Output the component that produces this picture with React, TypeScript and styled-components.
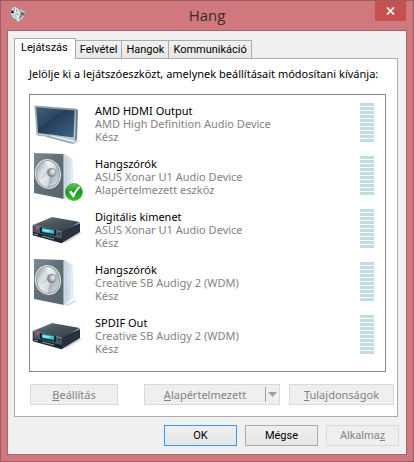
import React, { useState } from "react";
import styled, { createGlobalStyle, css } from "styled-components";

const uiFont = 'Roboto, "Liberation Sans", sans-serif';
const textFont = '"Noto Sans", "Open Sans", sans-serif';

const GlobalStyle = createGlobalStyle`
  *, *::before, *::after { box-sizing: border-box; }
  body { margin: 0; background: #d0787d; }
  button { margin: 0; }
`;

const Window = styled.div`
  min-height: 100vh;
  display: flex;
  flex-direction: column;
  padding: 0 6px 6px;
  border: 1px solid #9f5c60;
  background: #d0787d;
  font: 11px/16px ${textFont};
  color: #000;
`;

const TitleBar = styled.header`
  display: grid;
  grid-template-columns: 32px 1fr 32px;
  align-items: start;
  height: 29px;
`;

const TitleIcon = styled.span`
  padding: 5px 0 0 2px;
  svg { display: block; }
`;

const Title = styled.h1`
  margin: 0;
  padding-top: 4px;
  text-align: center;
  font: 15px/20px "Open Sans", "Noto Sans", sans-serif;
  color: #3a2b2d;
`;

const CloseButton = styled.button`
  width: 31px;
  height: 20px;
  display: flex;
  align-items: center;
  justify-content: center;
  padding: 0;
  border: 0;
  background: #c75050;
  color: #fff;
`;

const Client = styled.main`
  flex: 1;
  display: flex;
  flex-direction: column;
  padding: 7px 6px 8px;
  border: 1px solid #a9666a;
  background: #f0f0f0;
`;

const TabList = styled.div`
  display: flex;
  align-items: flex-end;
`;

const Tab = styled.button<{ $active: boolean }>`
  height: 18px;
  padding: 0 4px;
  border: 1px solid #acacac;
  border-bottom: 0;
  margin-left: -1px;
  background: linear-gradient(#f1f1f1, #e7e7e7);
  font: 11px/17px ${uiFont};
  color: #000;
  ${(p) =>
    p.$active &&
    css`
      position: relative;
      height: 21px;
      padding: 0 7px 3px 6px;
      margin: 0 0 -1px;
      background: #fff;
    `}
`;

const Panel = styled.section`
  flex: 1;
  display: flex;
  flex-direction: column;
  margin-right: 2px;
  padding: 7px 3px 11px 14px;
  border: 1px solid #acacac;
  background: #fff;
`;

const Prompt = styled.p`
  margin: 0 0 12px;
  font: 11px/16px ${textFont};
`;

const DeviceList = styled.ul`
  flex: 1;
  margin: 0 8px 12px 0;
  padding: 3px 11px 8px 2px;
  border: 1px solid #828790;
  list-style: none;
`;

const DeviceRow = styled.li`
  display: grid;
  grid-template-columns: 48px 1fr 14px;
  column-gap: 15px;
  height: 53px;
  align-items: start;
`;

const DeviceIcon = styled.span`
  position: relative;
  padding-top: 2px;
  > svg { display: block; overflow: visible; }
`;

const Badge = styled.span`
  position: absolute;
  right: -3px;
  bottom: 0;
  svg { display: block; }
`;

const DeviceText = styled.div`
  padding-top: 6px;
  font: 11px/13px ${textFont};
  color: #838383;
`;

const DeviceName = styled.div`
  color: #000;
`;

const Meter = styled.div`
  display: grid;
  row-gap: 1px;
  padding-top: 5px;
`;

const MeterBar = styled.span`
  height: 3px;
  background: #c1dce2;
`;

const Actions = styled.div`
  display: flex;
  padding-left: 1px;
`;

const Spacer = styled.span`
  flex: 1;
`;

const Button = styled.button<{ $primary?: boolean; $width: number; $dialog?: boolean }>`
  width: ${(p) => p.$width}px;
  height: 21px;
  padding: 0;
  border: 1px solid ${(p) => (p.$primary ? "#3399ff" : "#acacac")};
  background: linear-gradient(#f0f0f0, #e5e5e5);
  font: ${(p) => (p.$dialog ? `11px/18px ${uiFont}` : `11px/18px ${textFont}`)};
  color: #000;
  &:disabled {
    border-color: #d9d9d9;
    background: #efefef;
    color: #838383;
  }
`;

const SplitButton = styled.div`
  display: flex;
  width: 136px;
  height: 21px;
  margin-right: 9px;
  border: 1px solid #d9d9d9;
  background: #efefef;
`;

const SplitPart = styled.button<{ $arrow?: boolean }>`
  padding: 0;
  border: 0;
  background: none;
  font: 11px/18px ${textFont};
  color: #838383;
  ${(p) =>
    p.$arrow
      ? css`
          display: flex;
          align-items: center;
          justify-content: center;
          width: 14px;
          margin: 2px 0;
          border-left: 1px solid #a0a0a0;
        `
      : css`
          flex: 1;
        `}
`;

const Footer = styled.footer`
  display: flex;
  justify-content: flex-end;
  gap: 8px;
  padding: 8px 1px 0 0;
`;

const AppIcon = () => (
  <svg width="18" height="18" viewBox="0 0 18 18" aria-hidden="true">
    <path d="M3 2 7 1l5 2 4 3-1 5-5 5-4-1-4-5Z" fill="#8e9294" />
    <ellipse cx="6.5" cy="7" rx="4.5" ry="6" transform="rotate(-18 6.5 7)" fill="#d8dddf" />
    <ellipse cx="6" cy="6.5" rx="3" ry="4.5" transform="rotate(-18 6 6.5)" fill="#a6adb0" />
    <path d="m3 3 3 4-4 1m4-1 1-5M6 7l-1 5M6 7l5-1M7 8l3 5" stroke="#f1f4f4" />
    <path d="m11 4 4 2-1 5-3 3" fill="none" stroke="#c6cacc" strokeWidth="1.5" />
    <circle cx="14" cy="8" r="1.5" fill="#5c6264" />
    <circle cx="9" cy="14" r="1.5" fill="#e4e8e9" />
  </svg>
);

const Television = () => (
  <svg width="48" height="48" viewBox="0 0 48 48" aria-hidden="true">
    <defs>
      <linearGradient id="tvScreen" x1="0" y1="0" x2="1" y2="1">
        <stop offset="0" stopColor="#3f5873" />
        <stop offset=".4" stopColor="#223d59" />
        <stop offset="1" stopColor="#3c6588" />
      </linearGradient>
      <linearGradient id="tvFrame" x1="0" y1="0" x2="0" y2="1">
        <stop offset="0" stopColor="#8998a3" />
        <stop offset="1" stopColor="#c9d6de" />
      </linearGradient>
    </defs>
    <path d="m24 40 19 4 5-3-7-4Z" fill="#d9dcde" />
    <path d="m44 9 2 1-1 29-2 3Z" fill="#687986" />
    <path d="m3 6 41 3-1 31L5 35Z" fill="url(#tvFrame)" stroke="#8999a4" strokeWidth=".7" />
    <path d="m4.5 7.500 38 3-1 27L6 33Z" fill="url(#tvScreen)" />
    <path d="m4.500 7.500 28 2.200L7 28Z" fill="#829bb0" opacity=".1" />
    <path d="m15 36 5-1 20 4 4 2-3 2Z" fill="#dce7eb" stroke="#9dadb5" strokeWidth=".6" />
    <path d="m15 36 26 7v1L15 37Z" fill="#81939d" />
  </svg>
);

const Speaker = () => (
  <svg width="48" height="48" viewBox="0 0 48 48" aria-hidden="true">
    <defs>
      <linearGradient id="spFace" x1="0" y1="0" x2="1" y2="1">
        <stop offset="0" stopColor="#7d8c96" />
        <stop offset=".4" stopColor="#62717b" />
        <stop offset="1" stopColor="#54646d" />
      </linearGradient>
      <linearGradient id="spCone" x1="0" y1="0" x2="1" y2="1">
        <stop offset="0" stopColor="#8c989e" />
        <stop offset=".35" stopColor="#dfe4e6" />
        <stop offset=".65" stopColor="#aab4b9" />
        <stop offset="1" stopColor="#e9eded" />
      </linearGradient>
      <linearGradient id="spSide">
        <stop offset="0" stopColor="#b9cad5" />
        <stop offset="1" stopColor="#f2f7fa" />
      </linearGradient>
    </defs>
    <path d="m33 46 10-5 2 1-9 5Z" fill="#ddd" />
    <path d="m32 1 8 5 1 33-9 7Z" fill="url(#spSide)" stroke="#c5d3dc" strokeWidth=".5" />
    <path d="m35 6 1 35m2-33v31" stroke="#c6dbea" strokeWidth=".8" />
    <path d="M2 0 32 1V46L2 40Z" fill="url(#spFace)" />
    <path d="M32 1v45" stroke="#dfe8ed" />
    <ellipse cx="16" cy="21" rx="12.500" ry="14.500" transform="rotate(-8 16 21)" fill="#929ca1" stroke="#d9dfe2" strokeWidth="1.200" />
    <ellipse cx="16" cy="21" rx="11" ry="13" transform="rotate(-8 16 21)" fill="url(#spCone)" />
    <path d="M18 20 7 28c2 4 5 6 9 6Z" fill="#fff" opacity=".5" />
    <path d="M19 18 12 8c6-1 10 3 12 7Z" fill="#fff" opacity=".5" />
    <circle cx="19.500" cy="19.500" r="4.500" fill="#7f8a90" />
    <circle cx="20.500" cy="19" r="3.200" fill="#b7c0c4" />
    <circle cx="21" cy="18.500" r="1.500" fill="#e8edef" />
  </svg>
);

const Receiver = () => (
  <svg width="48" height="48" viewBox="0 0 48 48" aria-hidden="true">
    <defs>
      <linearGradient id="rxTop" x1="0" y1="0" x2="1" y2="1">
        <stop offset="0" stopColor="#8a939a" />
        <stop offset=".35" stopColor="#4f5962" />
        <stop offset="1" stopColor="#303a45" />
      </linearGradient>
    </defs>
    <path d="m32 36 15-10 3 1-16 10Z" fill="#c8c8c8" opacity=".7" />
    <path d="m29 25 19-8v9L30 37Z" fill="#28323e" />
    <path d="m1 19 19-8 28 5-18 10Z" fill="url(#rxTop)" />
    <path d="m1 19 29 7v11L1 29Z" fill="#4b5663" stroke="#222d39" strokeWidth=".6" />
    <path d="m1 19 29 7" stroke="#98a6b0" strokeWidth=".7" />
    <path d="m1 26 29 7v4L1 29Z" fill="#1b2430" />
    <path d="m8 21 16 3v6L8 27Z" fill="#112a37" />
    <path d="m10 22 12 2v4l-12-2Z" fill="#38b8c9" />
    <path d="m11 23 10 2-6 1-4-1Z" fill="#87eff0" />
    <circle cx="5.500" cy="22" r="1.500" fill="#d65252" />
    <circle cx="27" cy="28" r="1.500" fill="#142130" stroke="#8091a1" strokeWidth=".4" />
    <path d="m10 30 12 3m-20-5 4 1" stroke="#b9bba0" strokeWidth=".8" />
  </svg>
);

const CheckIcon = () => (
  <svg width="18" height="18" viewBox="0 0 18 18" aria-hidden="true">
    <defs>
      <linearGradient id="ckGreen" x1="0" y1="0" x2="0" y2="1">
        <stop offset="0" stopColor="#6dc663" />
        <stop offset=".5" stopColor="#169b1b" />
        <stop offset="1" stopColor="#39bd29" />
      </linearGradient>
    </defs>
    <circle cx="9" cy="9" r="8.500" fill="url(#ckGreen)" stroke="#24962a" strokeWidth=".6" />
    <path d="m4 9 2-1.500 2.500 3C10 7.500 12 5 14.500 3L15 4.500C12 7.500 10.500 10.500 9 14.500H8Z" fill="#fff" />
  </svg>
);

const icons = { television: Television, speaker: Speaker, receiver: Receiver };

type Device = {
  name: string;
  driver: string;
  status: string;
  icon: keyof typeof icons;
  isDefault?: boolean;
};

const devices: Device[] = [
  { name: "AMD HDMI Output", driver: "AMD High Definition Audio Device", status: "Kész", icon: "television" },
  { name: "Hangszórók", driver: "ASUS Xonar U1 Audio Device", status: "Alapértelmezett eszköz", icon: "speaker", isDefault: true },
  { name: "Digitális kimenet", driver: "ASUS Xonar U1 Audio Device", status: "Kész", icon: "receiver" },
  { name: "Hangszórók", driver: "Creative SB Audigy 2 (WDM)", status: "Kész", icon: "speaker" },
  { name: "SPDIF Out", driver: "Creative SB Audigy 2 (WDM)", status: "Kész", icon: "receiver" },
];

const tabs = ["Lejátszás", "Felvétel", "Hangok", "Kommunikáció"];

export default function App() {
  const [active, setActive] = useState(0);
  return (
    <>
      <GlobalStyle />
      <Window>
        <TitleBar>
          <TitleIcon><AppIcon /></TitleIcon>
          <Title>Hang</Title>
          <CloseButton aria-label="Bezárás">
            <svg width="9" height="8" viewBox="0 0 9 8" aria-hidden="true">
              <path d="m1 .5 7 7m0-7-7 7" stroke="currentColor" strokeWidth="1.700" />
            </svg>
          </CloseButton>
        </TitleBar>
        <Client>
          <TabList role="tablist">
            {tabs.map((label, i) => (
              <Tab key={label} role="tab" aria-selected={i === active} $active={i === active} onClick={() => setActive(i)}>
                {label}
              </Tab>
            ))}
          </TabList>
          <Panel role="tabpanel">
            <Prompt id="prompt">Jelölje ki a lejátszóeszközt, amelynek beállításait módosítani kívánja:</Prompt>
            <DeviceList aria-labelledby="prompt">
              {devices.map((d, i) => {
                const Icon = icons[d.icon];
                return (
                  <DeviceRow key={i}>
                    <DeviceIcon>
                      <Icon />
                      {d.isDefault && <Badge><CheckIcon /></Badge>}
                    </DeviceIcon>
                    <DeviceText>
                      <DeviceName>{d.name}</DeviceName>
                      <div>{d.driver}</div>
                      <div>{d.status}</div>
                    </DeviceText>
                    <Meter>
                      {Array.from({ length: 10 }, (_, n) => <MeterBar key={n} />)}
                    </Meter>
                  </DeviceRow>
                );
              })}
            </DeviceList>
            <Actions>
              <Button $width={88} disabled><u>B</u>eállítás</Button>
              <Spacer />
              <SplitButton>
                <SplitPart disabled><u>A</u>lapértelmezett</SplitPart>
                <SplitPart $arrow disabled aria-label="További lehetőségek">
                  <svg width="9" height="5" viewBox="0 0 9 5" aria-hidden="true">
                    <path d="M0 0h9L4.500 5Z" fill="#a0a0a0" />
                  </svg>
                </SplitPart>
              </SplitButton>
              <Button $width={105} disabled><u>T</u>ulajdonságok</Button>
            </Actions>
          </Panel>
          <Footer>
            <Button $dialog $width={73} $primary>OK</Button>
            <Button $dialog $width={73}>Mégse</Button>
            <Button $dialog $width={73} disabled>Alkalma<u>z</u></Button>
          </Footer>
        </Client>
      </Window>
    </>
  );
}
